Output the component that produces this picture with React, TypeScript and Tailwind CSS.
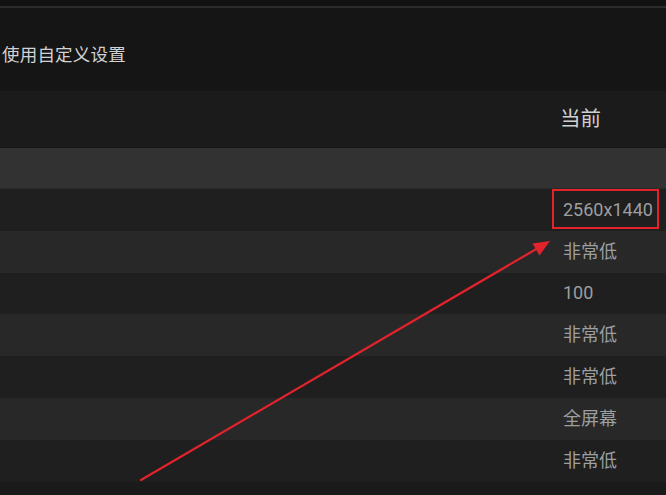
const rows = [
  { value: '2560x1440', tone: 'dark', boxed: true },
  { value: '非常低', tone: 'light' },
  { value: '100', tone: 'dark' },
  { value: '非常低', tone: 'light' },
  { value: '非常低', tone: 'dark' },
  { value: '全屏幕', tone: 'light' },
  { value: '非常低', tone: 'dark' },
]

export default function App() {
  return (
    <div
      className="relative w-[666px] h-[495px] overflow-hidden bg-[#141414] text-[#cfcfcf]"
      style={{ fontFamily: 'Roboto, "Noto Sans CJK SC", sans-serif' }}
    >
      {/* top bar */}
      <div className="h-[6px] bg-[#121212]" />
      <div className="h-[2px] bg-[#2c2c2c]" />

      {/* preset row */}
      <div className="h-[83px] flex items-center pl-[2px] pt-[12px] bg-[#151515]">
        <span className="text-[17.5px] text-[#d2d2d2] tracking-[0.2px]">使用自定义设置</span>
      </div>

      {/* column header */}
      <div className="h-[57px] flex items-center justify-end pr-[65px] bg-[#1b1b1b] border-b border-[#161616]">
        <span className="text-[20.5px] text-[#d0d0d0]">当前</span>
      </div>

      {/* section row */}
      <div className="h-[41px] bg-[#323232] border-b border-[#2a2a2a]" />

      {rows.map((r, i) => (
        <div
          key={i}
          className={
            'h-[41.8px] flex items-stretch ' + (r.tone === 'dark' ? 'bg-[#1f1f1f]' : 'bg-[#282828]')
          }
        >
          <div className="ml-auto w-[103px] relative flex items-center">
            {r.boxed && (
              <div className="absolute left-[-11px] top-0 w-[107px] h-[40px] border-2 border-[#e3232c]" />
            )}
            <span className="text-[18px] text-[#9c9ea0] leading-none">{r.value}</span>
          </div>
        </div>
      ))}
      <div className="h-[20px] bg-[#1a1a1a]" />

      {/* annotation arrow */}
      <svg className="absolute inset-0 pointer-events-none" width="666" height="495">
        <line x1="141" y1="480" x2="538" y2="248" stroke="#e3232c" strokeWidth="2.2" strokeLinecap="round" />
        <polygon points="550,241 532.5,243.5 539.5,255.5" fill="#e3232c" />
      </svg>
    </div>
  )
}
